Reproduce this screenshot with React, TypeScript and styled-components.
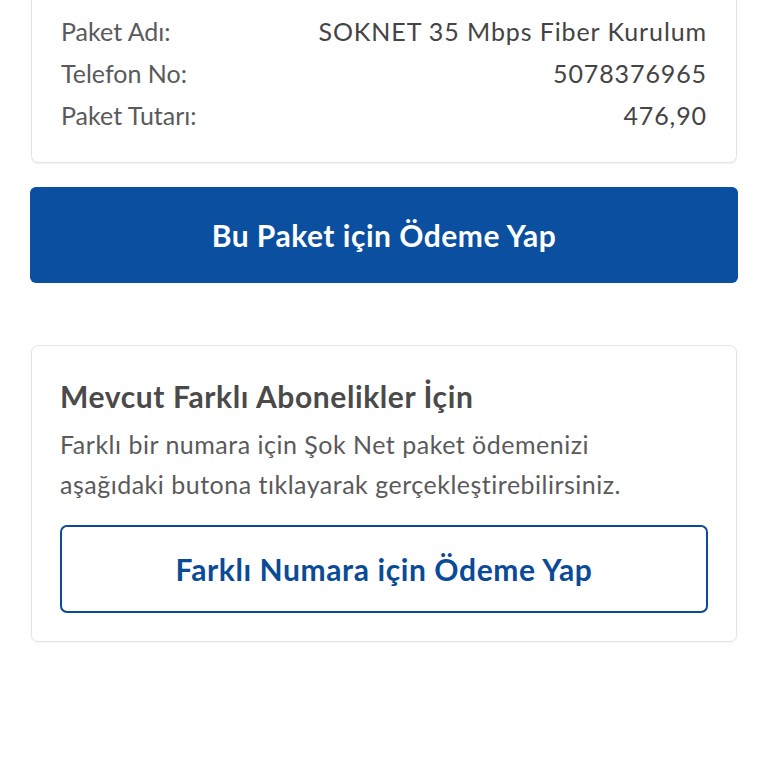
import React from 'react'
import { styled, createGlobalStyle } from 'styled-components'

const GlobalStyle = createGlobalStyle`
  html, body {
    margin: 0;
    padding: 0;
    background: #ffffff;
  }
  body {
    font-family: Lato, "Noto Sans", "Liberation Sans", sans-serif;
  }
`

const rows = [
  { label: 'Paket Adı:', value: 'SOKNET 35 Mbps Fiber Kurulum' },
  { label: 'Telefon No:', value: '5078376965' },
  { label: 'Paket Tutarı:', value: '476,90' }
]

export default function App() {
  return (
    <>
      <GlobalStyle />
      <Page>
        <SummaryCard>
          {rows.map((row) => (
            <Row key={row.label}>
              <Label>{row.label}</Label>
              <Value>{row.value}</Value>
            </Row>
          ))}
        </SummaryCard>

        <PrimaryButton type="button">Bu Paket için Ödeme Yap</PrimaryButton>

        <InfoCard>
          <Title>Mevcut Farklı Abonelikler İçin</Title>
          <Description>
            Farklı bir numara için Şok Net paket ödemenizi aşağıdaki butona tıklayarak
            gerçekleştirebilirsiniz.
          </Description>
          <OutlineButton type="button">Farklı Numara için Ödeme Yap</OutlineButton>
        </InfoCard>
      </Page>
    </>
  )
}

const Page = styled.div`
  width: 768px;
  height: 768px;
  box-sizing: border-box;
  padding: 0 30px;
  display: flex;
  flex-direction: column;
  background: #fff;
`

const SummaryCard = styled.div`
  box-sizing: border-box;
  margin: 0 1px;
  padding: 10px 29px 26px;
  border: 1px solid #e4e4e4;
  border-top: none;
  border-radius: 0 0 7px 7px;
  box-shadow: 0 1px 2px rgba(0, 0, 0, 0.06);
  display: flex;
  flex-direction: column;
`

const Row = styled.div`
  height: 42px;
  display: flex;
  align-items: center;
  justify-content: space-between;
  font-size: 25px;
`

const Label = styled.span`
  color: #5a5a5a;
  font-weight: 400;
`

const Value = styled.span`
  color: #444444;
  font-weight: 400;
  letter-spacing: 0.9px;
`

const PrimaryButton = styled.button`
  margin-top: 24px;
  height: 96px;
  border: none;
  border-radius: 6px;
  background: #0a4fa0;
  color: #ffffff;
  font-family: inherit;
  font-size: 30px;
  letter-spacing: 0.5px;
  font-weight: 700;
  cursor: pointer;
`

const InfoCard = styled.div`
  box-sizing: border-box;
  margin: 62px 1px 0;
  padding: 30px 28px 28px;
  border: 1px solid #e4e4e4;
  border-radius: 7px;
  box-shadow: 0 1px 2px rgba(0, 0, 0, 0.06);
  display: flex;
  flex-direction: column;
`

const Title = styled.h2`
  margin: 0;
  font-size: 30px;
  letter-spacing: 0.6px;
  line-height: 40px;
  font-weight: 700;
  color: #4a4a4a;
`

const Description = styled.p`
  margin: 8px 0 0;
  font-size: 25px;
  letter-spacing: 0.5px;
  line-height: 40px;
  color: #5a5a5a;
  max-width: 590px;
`

const OutlineButton = styled.button`
  margin-top: 21px;
  height: 88px;
  border: 2px solid #0a4a96;
  border-radius: 7px;
  background: #ffffff;
  color: #0a4a96;
  font-family: inherit;
  font-size: 30px;
  letter-spacing: 0.6px;
  font-weight: 700;
  cursor: pointer;
`
